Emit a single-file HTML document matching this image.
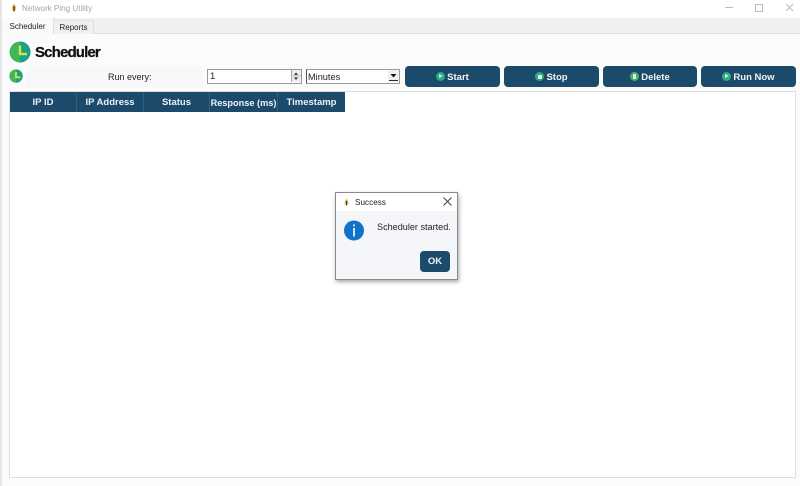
<!DOCTYPE html>
<html><head><meta charset="utf-8"><style>
html,body{margin:0;padding:0}
body{width:800px;height:486px;overflow:hidden;background:#fff;position:relative;font-family:"Liberation Sans",sans-serif;color:#1c1c1c}
.a{position:absolute;white-space:nowrap}
.btn{position:absolute;top:66px;height:21px;background:#1b4a6b;border-radius:4px;color:#f2f5f7;font-weight:bold;font-size:9.5px;line-height:23px;text-align:center}
.btn i{display:inline-block;width:9px;height:9px;border-radius:50%;background:#2eaa85;vertical-align:-1px;margin-right:2px;position:relative}
.btn i b{position:absolute}
.th{position:absolute;top:92px;height:20px;background:#1b4a6b;color:#eef2f5;font-weight:bold;font-size:9.5px;line-height:22px;text-align:center;box-sizing:border-box;border-right:1px solid #2c5f82}
</style></head><body>
<div class="a" style="left:0;top:0;width:2px;height:486px;background:#e4e4e4"></div>
<div class="a" style="left:2px;top:0;width:798px;height:18px;background:#fff"></div>
<svg class="a" style="left:10px;top:3px" width="8" height="10" viewBox="0 0 8 10"><path d="M4 .5C6 3 6.5 4.5 6 6.5L4 9.5 2 6.5C1.5 4.5 2 3 4 .5Z" fill="#e9c46a"/><rect x="3.3" y="3" width="1.4" height="5" fill="#4a3a20"/></svg>
<div class="a" style="left:22px;top:3px;font-size:8.1px;line-height:11px;color:#a4a4a4">Network Ping Utility</div>
<div class="a" style="left:725px;top:7px;width:8px;height:1px;background:#bbb"></div>
<div class="a" style="left:755px;top:4px;width:6px;height:6px;border:1px solid #bbb"></div>
<svg class="a" style="left:785px;top:3px" width="9" height="9" viewBox="0 0 9 9"><path d="M1 1L8 8M8 1L1 8" stroke="#bbb" stroke-width="1"/></svg>

<div class="a" style="left:2px;top:18px;width:798px;height:15px;background:#f0f0f0;border-bottom:1px solid #dcdcdc"></div>
<div class="a" style="left:2px;top:18px;width:51px;height:17px;background:#fafafa;border-right:1px solid #dedede;font-size:8px;line-height:17px;text-align:center;color:#222">Scheduler</div>
<div class="a" style="left:54px;top:20px;width:39px;height:13px;background:#f0f0f0;border-right:1px solid #dedede;border-top:1px solid #e2e2e2;font-size:8px;line-height:14px;text-align:center;color:#222">Reports</div>

<div class="a" style="left:2px;top:34px;width:798px;height:452px;background:#fbfbfb"></div>

<svg class="a" style="left:9px;top:41px" width="22" height="22" viewBox="0 0 22 22"><circle cx="11" cy="11" r="10.5" fill="#3fb75a"/><path d="M11 .5A10.5 10.5 0 0 1 11 21.5Z" fill="#1f9f86"/><path d="M11 4.5V13H18" fill="none" stroke="#cfe83d" stroke-width="2.4"/></svg>
<div class="a" style="left:35px;top:43px;font-size:15px;line-height:19px;font-weight:bold;color:#111;letter-spacing:-.85px;-webkit-text-stroke:.25px #111">Scheduler</div>

<svg class="a" style="left:9px;top:69px" width="14" height="14" viewBox="0 0 22 22"><circle cx="11" cy="11" r="10.5" fill="#3fb75a"/><path d="M11 .5A10.5 10.5 0 0 1 11 21.5Z" fill="#1f9f86"/><path d="M11 4.5V13H18" fill="none" stroke="#cfe83d" stroke-width="3"/></svg>
<div class="a" style="left:26px;top:66px;width:78px;height:22px;background:#f6f8fa"></div>
<div class="a" style="left:104px;top:66px;width:100px;height:22px;background:#f6f8fa;font-size:9px;line-height:23px;text-indent:4px;color:#222">Run every:</div>

<div class="a" style="left:207px;top:69px;width:93px;height:13px;background:#fff;border:1px solid #9a9a9a;font-size:9.5px;line-height:14px;text-indent:2px;color:#222">1</div>
<div class="a" style="left:291px;top:70px;width:9px;height:12px;background:#ececec;border-left:1px solid #aaa"></div>
<svg class="a" style="left:291px;top:70px" width="10" height="12" viewBox="0 0 10 12"><path d="M3 5L5 2.5 7 5ZM3 7.5L5 10 7 7.5Z" fill="#333"/><path d="M0 6H10" stroke="#aaa" stroke-width=".6"/></svg>

<div class="a" style="left:306px;top:69px;width:92px;height:13px;background:#fff;border:1px solid #9a9a9a;border-left:1px solid #555;font-size:9.2px;line-height:14px;text-indent:1px;color:#222">Minutes</div>
<svg class="a" style="left:388px;top:70px" width="11" height="12" viewBox="0 0 11 12"><rect width="11" height="12" fill="#f0f0f0"/><path d="M2.5 4H8.5L5.5 7.5Z" fill="#111"/><path d="M1 10.5H10" stroke="#333"/></svg>

<div class="btn" style="left:405px;width:95px"><i><b style="left:3px;top:2px;border-left:4px solid #cfeee0;border-top:2.5px solid transparent;border-bottom:2.5px solid transparent"></b></i>Start</div>
<div class="btn" style="left:504px;width:95px"><i><b style="left:2.5px;top:2.5px;width:4px;height:4px;background:#d9f2e8"></b></i>Stop</div>
<div class="btn" style="left:603px;width:94px"><i style="background:#4aaf6c"><b style="left:3px;top:2px;width:3px;height:5px;background:#d9f2e8"></b></i>Delete</div>
<div class="btn" style="left:701px;width:95px"><i><b style="left:3px;top:2px;border-left:4px solid #d9f2e8;border-top:2.5px solid transparent;border-bottom:2.5px solid transparent"></b></i>Run Now</div>

<div class="a" style="left:9px;top:91px;width:785px;height:385px;background:#fff;border:1px solid #dfdfdf"></div>
<div class="th" style="left:10px;width:67px">IP ID</div>
<div class="th" style="left:77px;width:67px">IP Address</div>
<div class="th" style="left:144px;width:66px">Status</div>
<div class="th" style="left:210px;width:68px;font-size:9.2px">Response (ms)</div>
<div class="th" style="left:278px;width:67px;border-right:0">Timestamp</div>

<div class="a" style="left:335px;top:192px;width:121px;height:86px;background:#f4f6f9;border:1px solid #8a8a8a;box-shadow:1px 2px 4px rgba(0,0,0,.35)"></div>
<div class="a" style="left:336px;top:193px;width:121px;height:18px;background:#fff"></div>
<svg class="a" style="left:343px;top:198px" width="7" height="9" viewBox="0 0 8 10"><path d="M4 .5C6 3 6.5 4.5 6 6.5L4 9.5 2 6.5C1.5 4.5 2 3 4 .5Z" fill="#e9c46a"/><rect x="3.3" y="3" width="1.4" height="5" fill="#4a3a20"/></svg>
<div class="a" style="left:355px;top:197px;font-size:8.2px;line-height:11px;color:#222">Success</div>
<svg class="a" style="left:443px;top:197px" width="9" height="9" viewBox="0 0 9 9"><path d="M.5 .5L8.5 8.5M8.5 .5L.5 8.5" stroke="#444" stroke-width="1"/></svg>
<svg class="a" style="left:344px;top:220px" width="20" height="21" viewBox="0 0 20 21"><circle cx="10" cy="10.5" r="10" fill="#0f74c9"/><rect x="9.2" y="4.5" width="1.6" height="1.8" fill="#fff"/><rect x="9.2" y="8" width="1.6" height="8.5" fill="#fff"/></svg>
<div class="a" style="left:377px;top:221px;font-size:9.1px;line-height:12px;color:#222">Scheduler started.</div>
<div class="a" style="left:420px;top:251px;width:30px;height:21px;background:#1b4a6b;border-radius:4px;color:#f2f5f7;font-weight:bold;font-size:9.5px;line-height:22px;text-align:center">OK</div>
</body></html>
